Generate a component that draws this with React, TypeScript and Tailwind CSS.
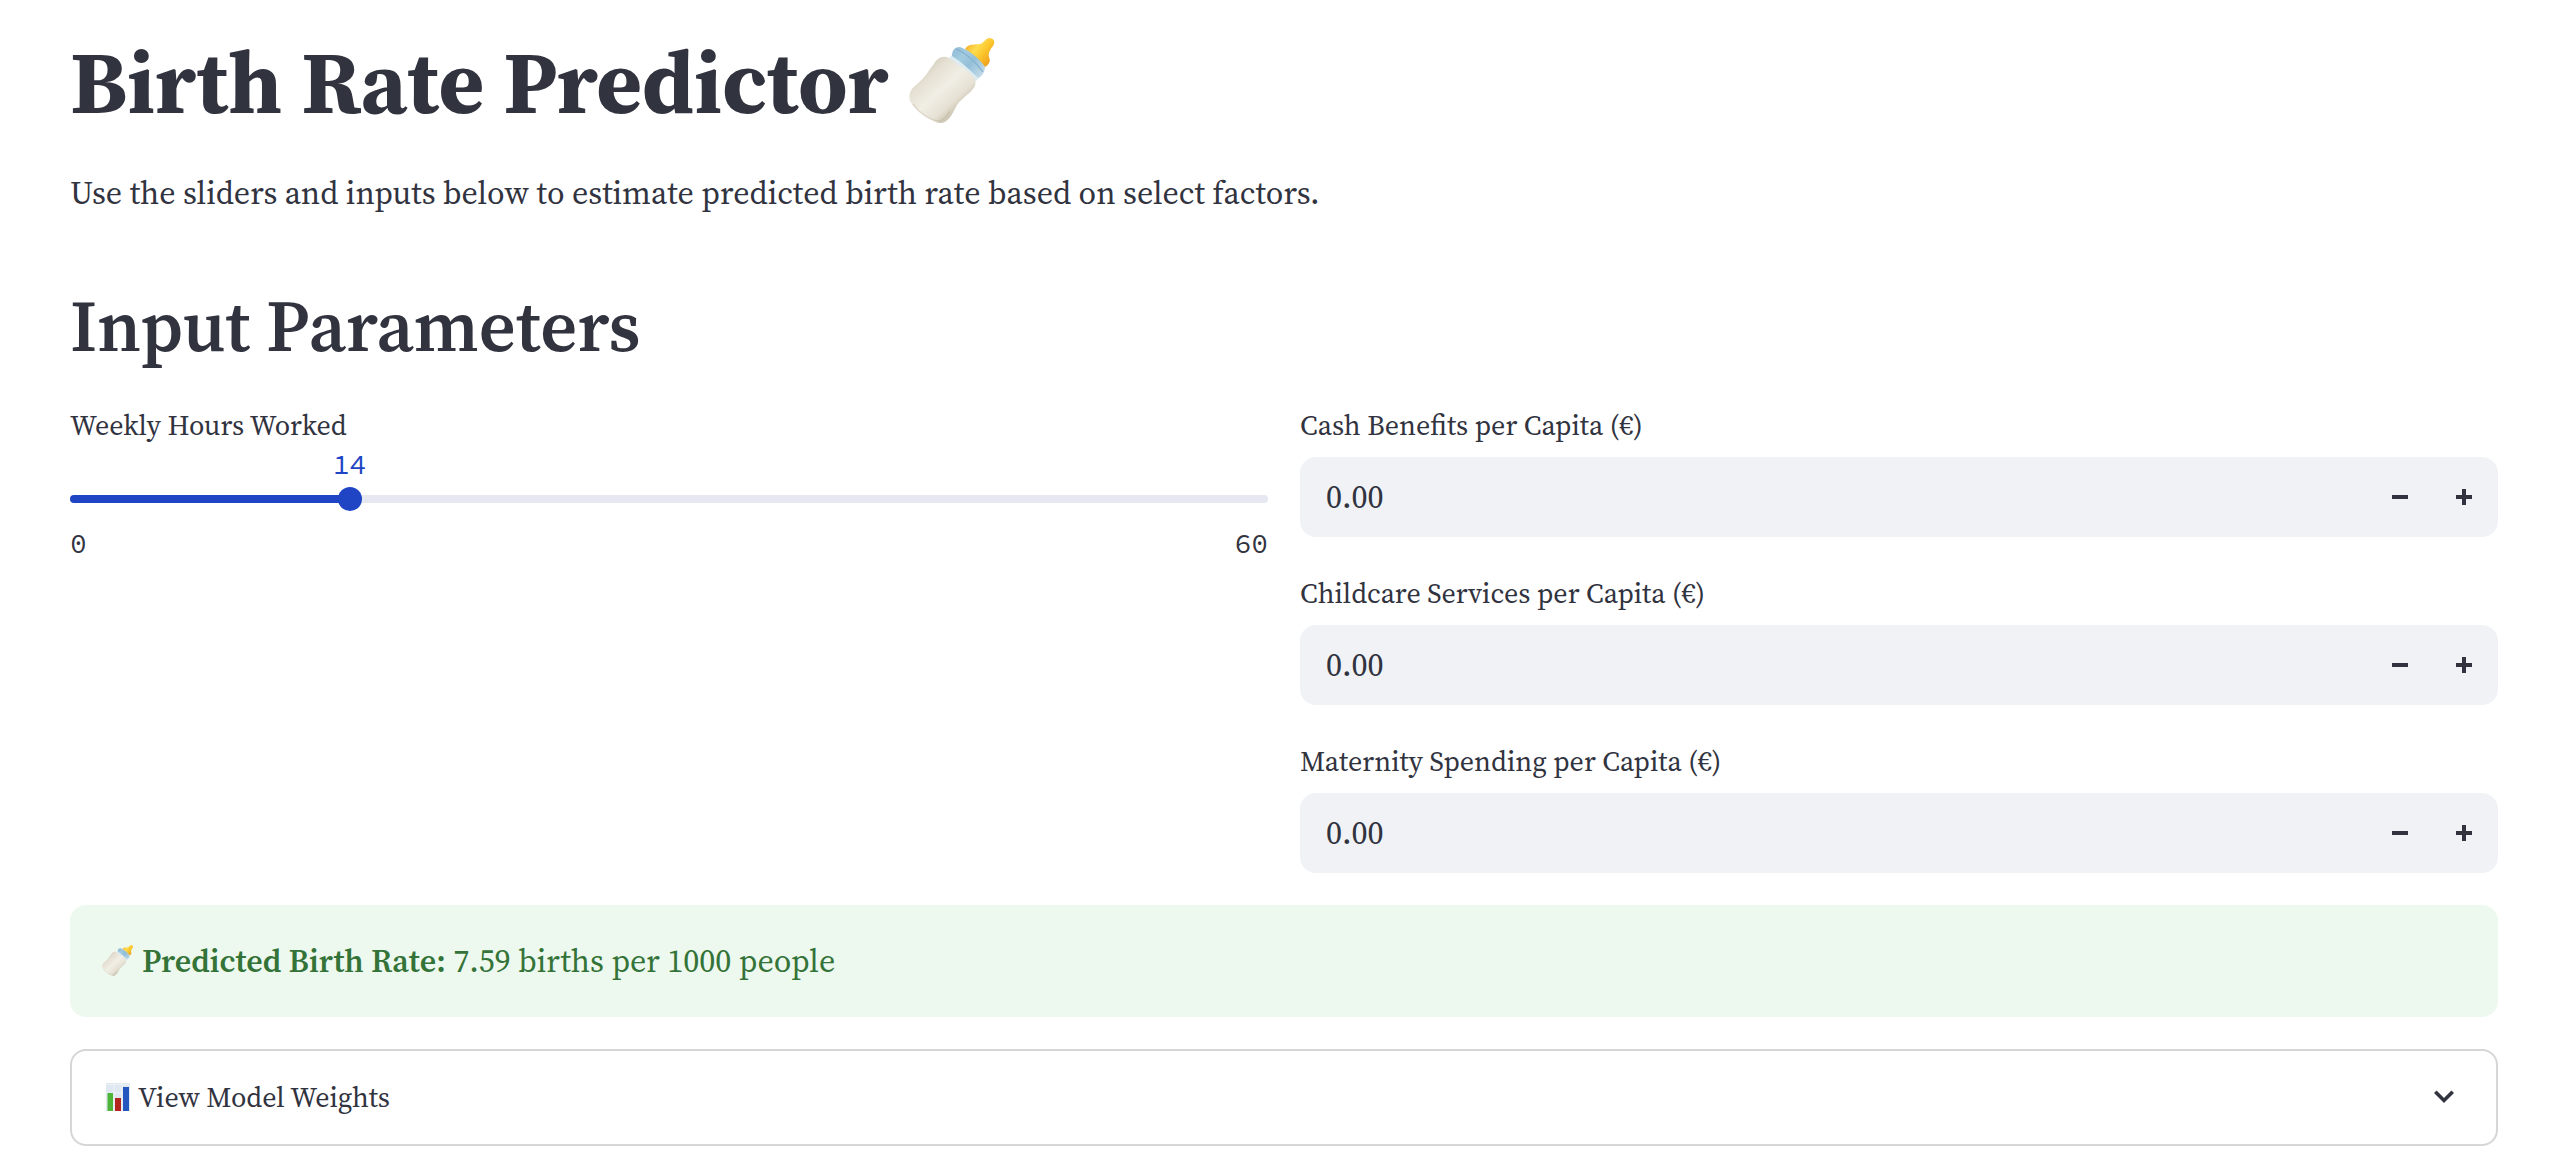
import { useId, useState } from "react";

function BottleIcon({ className }: { className: string }) {
  const id = useId();
  return (
    <svg viewBox="0 0 88 88" className={className} role="img" aria-label="Baby bottle">
      <defs>
        <linearGradient id={id + "milk"} x1="0.15" y1="0.2" x2="0.75" y2="0.85">
          <stop offset="0" stopColor="#d3ccbb" />
          <stop offset="0.2" stopColor="#e5e0d3" />
          <stop offset="0.5" stopColor="#f1eee5" />
          <stop offset="0.78" stopColor="#e6e1d4" />
          <stop offset="1" stopColor="#c4bca8" />
        </linearGradient>
        <linearGradient id={id + "ring"} x1="0" y1="0" x2="1" y2="0.8">
          <stop offset="0" stopColor="#8fbbd6" />
          <stop offset="0.35" stopColor="#a3cbe0" />
          <stop offset="0.6" stopColor="#94bfd8" />
          <stop offset="1" stopColor="#c3dbe9" />
        </linearGradient>
        <linearGradient id={id + "teat"} x1="0" y1="0.1" x2="0.9" y2="0.8">
          <stop offset="0" stopColor="#f0a01c" />
          <stop offset="0.4" stopColor="#ffdc4f" />
          <stop offset="0.65" stopColor="#fbc62c" />
          <stop offset="1" stopColor="#ee9f1c" />
        </linearGradient>
      </defs>
      <path
        d="M56 11C60 5 66 7 71 6C75 5 76 0 81 0C86 1 86 5 84 8C81 12 79 15 80 19C82 24 80 26 76 29Z"
        fill={`url(#${id}teat)`}
      />
      <path d="M38 22L45 15L74 36L66 44C58 40 48 32 38 22Z" fill="#dcecf1" />
      <path
        d="M43 18C43 12 46 9 51 9C60 12 71 21 76 29C76 34 73 38 69 40C62 33 53 24 43 18Z"
        fill={`url(#${id}ring)`}
      />
      <path d="M47 11C57 15 68 25 74 34" fill="none" stroke="#82b0cc" strokeWidth="1.2" />
      <path
        d="M25 26C28 20 34 17 40 20C48 26 56 31 62 36C67 41 68 46 64 51C59 57 52 61 48 67C44 74 41 83 33 85C24 86 5 71 1 63C-1 56 2 51 7 47C17 39 19 33 25 26Z"
        fill={`url(#${id}milk)`}
      />
      <path d="M4 66C10 75 20 82 30 83C35 82 38 78 41 73" fill="none" stroke="#b9b09c" strokeWidth="1.5" opacity="0.35" />
    </svg>
  );
}

function ChartIcon() {
  return (
    <svg viewBox="0 0 24 28" className="h-7 w-6 shrink-0" role="img" aria-label="Bar chart">
      <rect width="24" height="28" fill="#dfe8f1" />
      <path d="M0 1.5H24M0 10H24M0 19H24M8 0V28M16 0V28" stroke="#edf2f7" strokeWidth="1" />
      <rect x="1.5" y="10" width="5.5" height="18" fill="#4fb53a" />
      <rect x="9" y="15" width="6" height="13" fill="#b3261e" />
      <rect x="17" y="4" width="6" height="24" fill="#2456bf" />
    </svg>
  );
}

function NumberField({ label }: { label: string }) {
  const id = useId();
  const [value, setValue] = useState("0.00");
  const step = (by: number) => setValue((v) => Math.max(0, (parseFloat(v) || 0) + by).toFixed(2));
  return (
    <div>
      <label htmlFor={id} className="block h-14 text-[28px] leading-12">
        {label}
      </label>
      <div className="flex h-20 overflow-hidden rounded-2xl bg-[#f0f2f6]">
        <input
          id={id}
          type="number"
          min="0"
          step="0.01"
          value={value}
          onChange={(e) => setValue(e.target.value)}
          className="min-w-0 flex-1 appearance-none bg-transparent pl-[26px] text-[32px] outline-none [-moz-appearance:textfield] [&::-webkit-inner-spin-button]:appearance-none"
        />
        <button type="button" aria-label={`Decrease ${label}`} onClick={() => step(-0.01)} className="flex w-16 items-center justify-center">
          <svg viewBox="0 0 16 16" className="size-4" fill="#31333f">
            <path d="M0 6H16V10H0Z" />
          </svg>
        </button>
        <button type="button" aria-label={`Increase ${label}`} onClick={() => step(0.01)} className="mr-0.5 flex w-16 items-center justify-center">
          <svg viewBox="0 0 16 16" className="size-4" fill="#31333f">
            <path d="M6 0H10V6H16V10H10V16H6V10H0V6H6Z" />
          </svg>
        </button>
      </div>
    </div>
  );
}

function HoursSlider() {
  const id = useId();
  const [hours, setHours] = useState(14);
  const percent = `${(hours / 60) * 100}%`;
  return (
    <div>
      <label htmlFor={id} className="block h-12 text-[28px] leading-12">
        Weekly Hours Worked
      </label>
      <div className="relative h-[46px] font-['Source_Code_Pro','Liberation_Mono',monospace] text-[28px] leading-[30px] text-[#1f45c4]">
        <output htmlFor={id} className="absolute top-0 -translate-x-1/2" style={{ left: percent }}>
          {hours}
        </output>
      </div>
      <div className="relative h-2 rounded-full bg-[#e5e8f1]">
        <div className="h-2 rounded-full bg-[#1f45c4]" style={{ width: percent }} />
        <input
          id={id}
          type="range"
          min="0"
          max="60"
          value={hours}
          onChange={(e) => setHours(Number(e.target.value))}
          className="absolute -inset-x-3 -inset-y-2 cursor-pointer appearance-none bg-transparent outline-none [&::-webkit-slider-thumb]:size-6 [&::-webkit-slider-thumb]:appearance-none [&::-webkit-slider-thumb]:rounded-full [&::-webkit-slider-thumb]:bg-[#1f45c4]"
        />
      </div>
      <div className="mt-5 flex justify-between font-['Source_Code_Pro','Liberation_Mono',monospace] text-[28px] leading-10">
        <span>0</span>
        <span>60</span>
      </div>
    </div>
  );
}

function ModelWeights() {
  const [open, setOpen] = useState(false);
  return (
    <section className="mt-8 rounded-2xl border-2 border-[#d6d6d8]">
      <button
        type="button"
        aria-expanded={open}
        onClick={() => setOpen(!open)}
        className="flex h-[93px] w-full items-center gap-2 px-[34px] pb-0.5 text-left text-[28px]"
      >
        <ChartIcon />
        <span className="flex-1">View Model Weights</span>
        <svg viewBox="0 0 20 13" className="mr-2 h-[13px] w-5" fill="none" stroke="#31333f" strokeWidth="3.6">
          <path d="M1.3 1.7L10 10.4L18.7 1.7" />
        </svg>
      </button>
      {open && <div className="h-24" />}
    </section>
  );
}

export default function App() {
  return (
    <main className="bg-white pt-[30px] pr-14 pb-6 pl-[70px] font-['Source_Serif_Pro','Source_Serif_4','Liberation_Serif',serif] text-[#31333f]">
      <h1 className="flex items-center gap-5 text-[88px] leading-[104px] font-bold">
        Birth Rate Predictor
        <BottleIcon className="size-[88px]" />
      </h1>
      <p className="mt-[33px] text-[32px] leading-[52px]">
        Use the sliders and inputs below to estimate predicted birth rate based on select factors.
      </p>
      <h2 className="mt-[63px] text-[72px] leading-[88px] font-semibold">Input Parameters</h2>
      <div className="mt-[31px] grid grid-cols-2 gap-8">
        <HoursSlider />
        <div className="flex flex-col gap-8">
          <NumberField label="Cash Benefits per Capita (€)" />
          <NumberField label="Childcare Services per Capita (€)" />
          <NumberField label="Maternity Spending per Capita (€)" />
        </div>
      </div>
      <div role="status" className="mt-8 flex h-28 items-center gap-2 rounded-2xl bg-[#edf9ef] px-8 text-[32px] text-[#347338]">
        <BottleIcon className="size-8 shrink-0" />
        <p>
          <strong className="font-semibold">Predicted Birth Rate:</strong> 7.59 births per 1000 people
        </p>
      </div>
      <ModelWeights />
    </main>
  );
}
